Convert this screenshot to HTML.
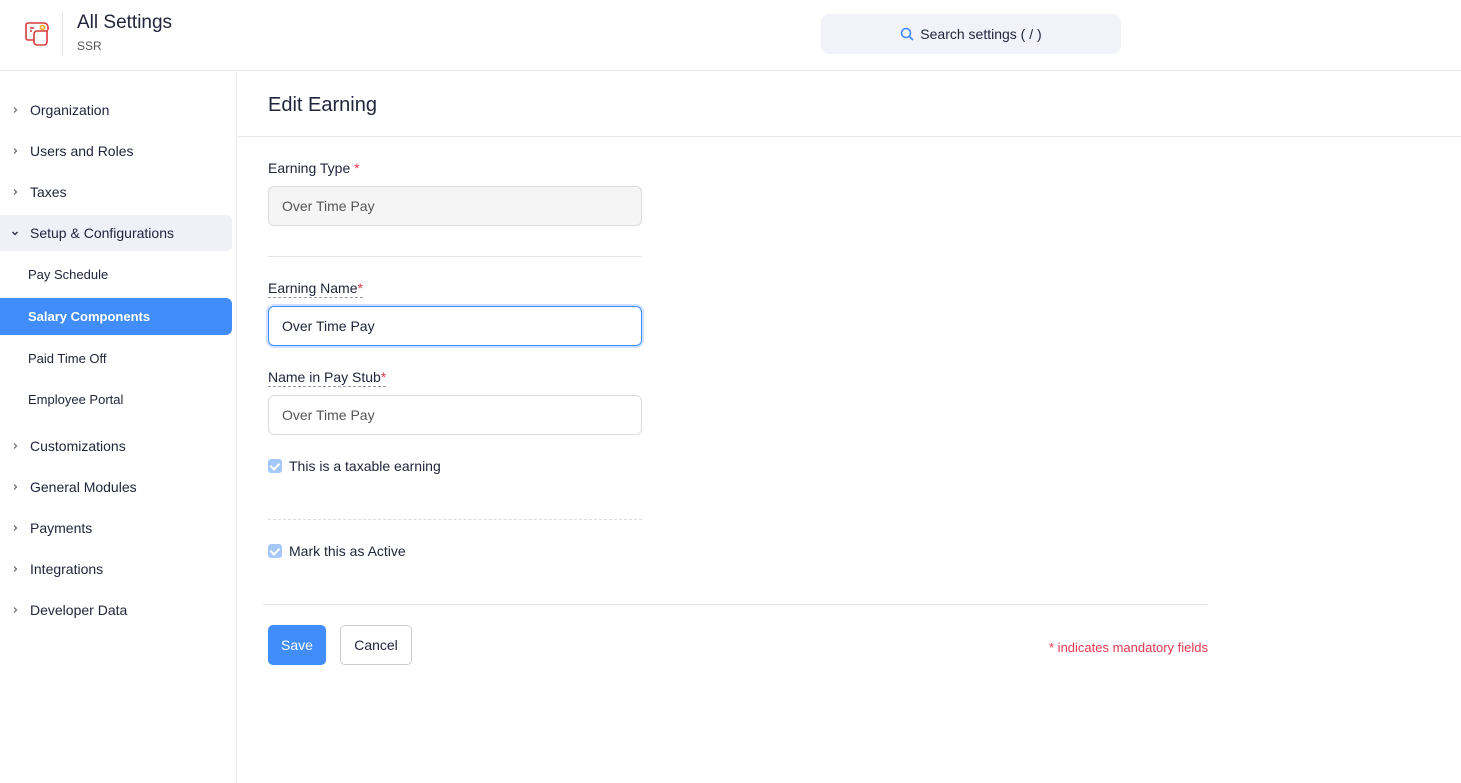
<!DOCTYPE html>
<html><head><meta charset="utf-8"><style>
*{box-sizing:border-box;margin:0;padding:0}
body{width:1461px;height:783px;overflow:hidden;background:#fff;font-family:"Liberation Sans",sans-serif;color:#21263c;position:relative}
.hdr{position:absolute;top:0;left:0;width:1461px;height:71px;border-bottom:1px solid #e6e8ee;background:#fff}
.sep{position:absolute;left:62px;top:12px;width:1px;height:44px;background:#e3e3e8}
.title{position:absolute;left:77px;top:12px;font-size:19px;color:#21263c}
.sub{position:absolute;left:77px;top:39px;font-size:12px;color:#555}
.search{position:absolute;left:821px;top:14px;width:300px;height:40px;background:#f1f2fa;border-radius:8px;font-size:14px;color:#21263c;display:flex;align-items:center;justify-content:center;gap:6px}
.side{position:absolute;top:72px;left:0;width:237px;height:711px;border-right:1px solid #e6e8ee}
.it{position:absolute;left:30px;font-size:14px;color:#21263c}
.chev{position:absolute;left:11px;width:8px;height:8px}
.subit{position:absolute;left:28px;font-size:13px;color:#21263c}
.active{position:absolute;left:0;top:298px;width:232px;height:37px;background:#408dfb;border-radius:0 6px 6px 0;color:#fff;font-weight:bold;font-size:13px;padding:11px 0 0 28px}
.setup{position:absolute;left:0;top:215px;width:232px;height:36px;background:#f0f0f8;border-radius:0 6px 6px 0}
.main-h{position:absolute;left:238px;top:72px;width:1223px;height:65px;border-bottom:1px solid #e6e8ee}
.main-h span{position:absolute;left:30px;top:22px;font-size:20px;color:#21263c}
.lbl{position:absolute;left:268px;font-size:14px;color:#21263c}
.dash{border-bottom:1px dashed #999;padding-bottom:1px}
.req{color:#e5384e}
.inp{position:absolute;left:268px;width:374px;height:40px;border:1px solid #dcdce0;border-radius:6px;font-size:14px;padding:11px 13px;color:#555}
.cb{position:absolute;left:268px;width:14px;height:14px;background:#a5c8fb;border-radius:3px}
.cb:after{content:"";position:absolute;left:4px;top:2px;width:4px;height:7px;border:solid #fff;border-width:0 2px 2px 0;transform:rotate(45deg)}
.btn{position:absolute;top:625px;height:40px;border-radius:5px;font-size:14px;display:flex;align-items:center;justify-content:center}
</style></head><body>
<div class="hdr">
<svg style="position:absolute;left:23px;top:19px" width="28" height="28" viewBox="0 0 28 28" fill="none" stroke="#d83a3a" stroke-width="1.6" stroke-linejoin="round"><path d="M11 21H5a2 2 0 0 1-2-2V6a2 2 0 0 1 2-2h16a4 4 0 0 1 4 4v3"/><path d="M11 15v8a3 3 0 0 0 3 3h7a3 3 0 0 0 3-3V11"/><path d="M11 15a3 3 0 0 1 3-3h10"/><path d="M7 9h4M7 12h2"/><circle cx="19.5" cy="8.5" r="2" stroke="#e9a22b"/></svg>
<div class="sep"></div>
<div class="title">All Settings</div>
<div class="sub">SSR</div>
<div class="search"><svg width="14" height="14" viewBox="0 0 14 14" fill="none" stroke="#408dfb" stroke-width="1.6"><circle cx="6" cy="6" r="4.5"/><path d="M9.5 9.5 13 13"/></svg>Search settings ( / )</div>
</div>
<div class="side"></div>
<svg class="chev" style="top:106px" viewBox="0 0 8 8"><path d="M3 1.5 5.5 4 3 6.5" fill="none" stroke="#666" stroke-width="1.2"/></svg><div class="it" style="top:102px">Organization</div>
<svg class="chev" style="top:147px" viewBox="0 0 8 8"><path d="M3 1.5 5.5 4 3 6.5" fill="none" stroke="#666" stroke-width="1.2"/></svg><div class="it" style="top:143px">Users and Roles</div>
<svg class="chev" style="top:188px" viewBox="0 0 8 8"><path d="M3 1.5 5.5 4 3 6.5" fill="none" stroke="#666" stroke-width="1.2"/></svg><div class="it" style="top:184px">Taxes</div>
<div class="setup"></div>
<svg class="chev" style="top:229px" viewBox="0 0 8 8"><path d="M1.5 3 4 5.5 6.5 3" fill="none" stroke="#21263c" stroke-width="1.3"/></svg>
<div class="it" style="top:225px">Setup &amp; Configurations</div>
<div class="subit" style="top:267px">Pay Schedule</div>
<div class="active">Salary Components</div>
<div class="subit" style="top:351px">Paid Time Off</div>
<div class="subit" style="top:392px">Employee Portal</div>
<svg class="chev" style="top:442px" viewBox="0 0 8 8"><path d="M3 1.5 5.5 4 3 6.5" fill="none" stroke="#666" stroke-width="1.2"/></svg><div class="it" style="top:438px">Customizations</div>
<svg class="chev" style="top:483px" viewBox="0 0 8 8"><path d="M3 1.5 5.5 4 3 6.5" fill="none" stroke="#666" stroke-width="1.2"/></svg><div class="it" style="top:479px">General Modules</div>
<svg class="chev" style="top:524px" viewBox="0 0 8 8"><path d="M3 1.5 5.5 4 3 6.5" fill="none" stroke="#666" stroke-width="1.2"/></svg><div class="it" style="top:520px">Payments</div>
<svg class="chev" style="top:565px" viewBox="0 0 8 8"><path d="M3 1.5 5.5 4 3 6.5" fill="none" stroke="#666" stroke-width="1.2"/></svg><div class="it" style="top:561px">Integrations</div>
<svg class="chev" style="top:606px" viewBox="0 0 8 8"><path d="M3 1.5 5.5 4 3 6.5" fill="none" stroke="#666" stroke-width="1.2"/></svg><div class="it" style="top:602px">Developer Data</div>
<div class="main-h"><span>Edit Earning</span></div>
<div class="lbl" style="top:160px">Earning Type <span class="req">*</span></div>
<div class="inp" style="top:186px;background:#f5f5f5">Over Time Pay</div>
<div style="position:absolute;left:268px;top:256px;width:374px;border-top:1px solid #e3e3e8"></div>
<div class="lbl" style="top:280px"><span class="dash">Earning Name<span class="req">*</span></span></div>
<div class="inp" style="top:306px;border-color:#408dfb;box-shadow:0 0 0 2px #cfe1fd;color:#21263c">Over Time Pay</div>
<div class="lbl" style="top:369px"><span class="dash">Name in Pay Stub<span class="req">*</span></span></div>
<div class="inp" style="top:395px">Over Time Pay</div>
<div class="cb" style="top:459px"></div><div class="lbl" style="left:289px;top:458px">This is a taxable earning</div>
<div style="position:absolute;left:268px;top:519px;width:374px;border-top:1px dashed #dcdce0"></div>
<div class="cb" style="top:544px"></div><div class="lbl" style="left:289px;top:543px">Mark this as Active</div>
<div style="position:absolute;left:263px;top:604px;width:945px;border-top:1px solid #e3e3e8"></div>
<div class="btn" style="left:268px;width:58px;background:#408dfb;color:#fff">Save</div>
<div class="btn" style="left:340px;width:72px;border:1px solid #ccc;color:#21263c">Cancel</div>
<div style="position:absolute;right:253px;top:640px;font-size:13px;color:#e5384e">* indicates mandatory fields</div>
</body></html>
